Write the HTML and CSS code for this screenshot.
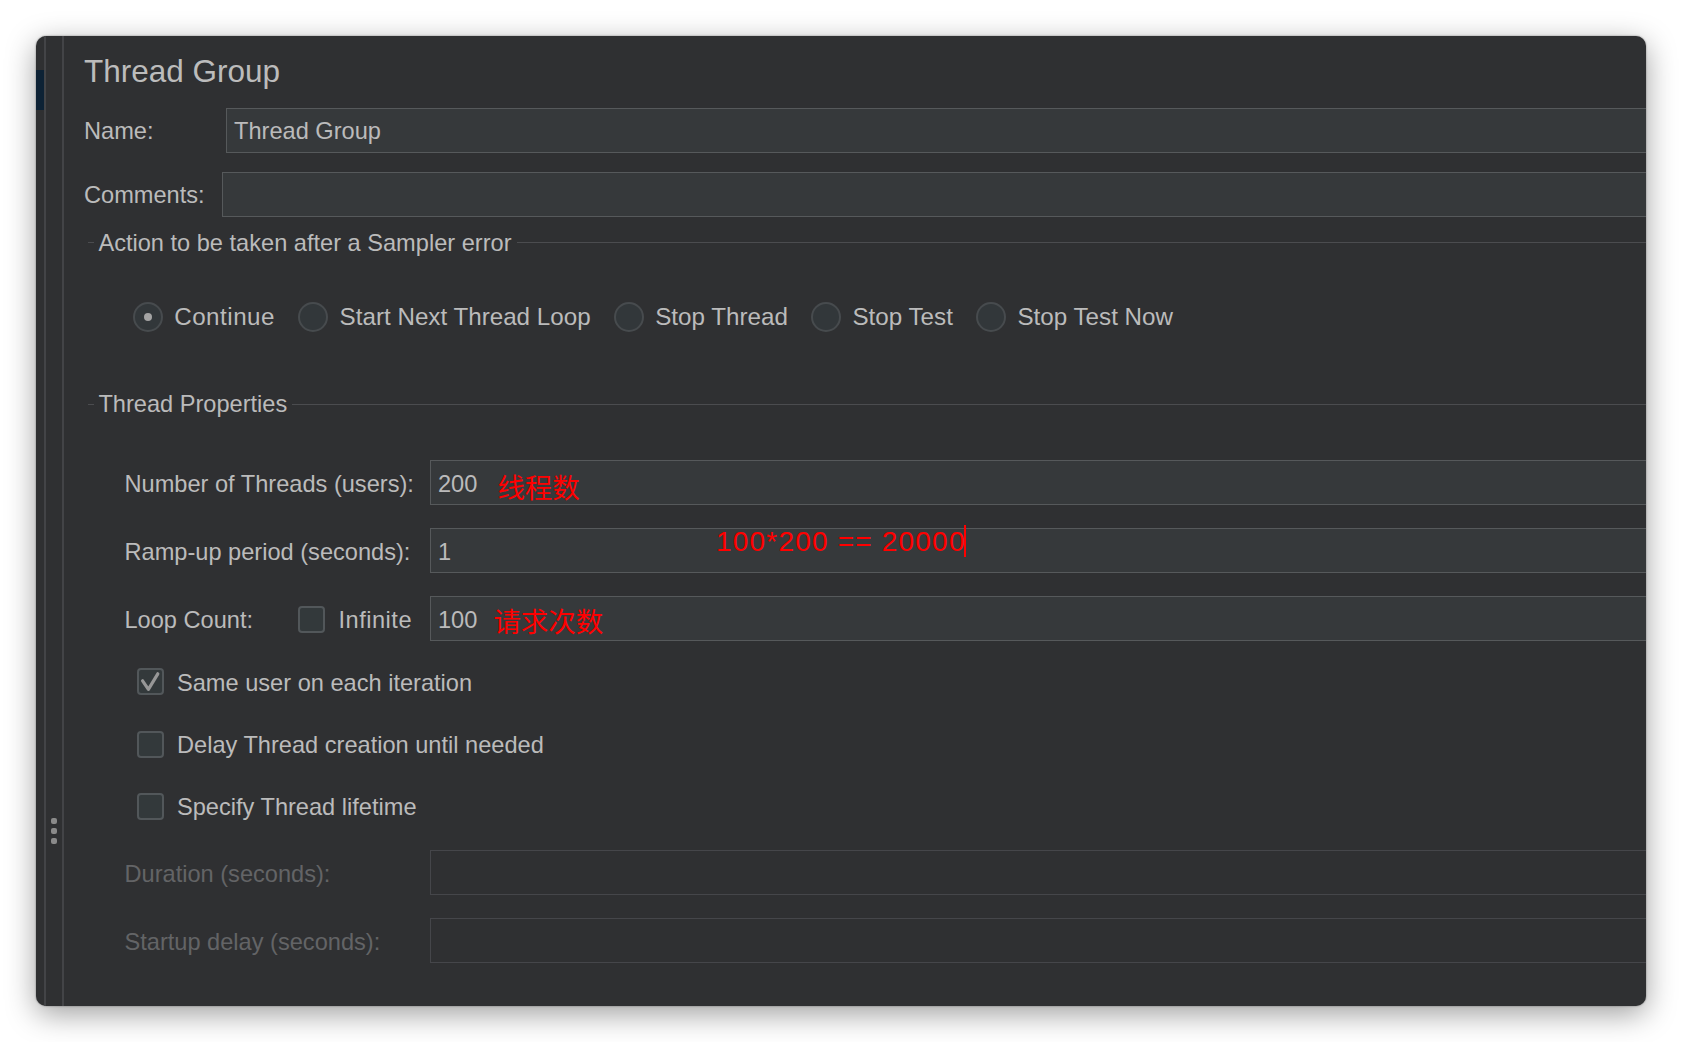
FILE: index.html
```html
<!DOCTYPE html>
<html lang="en">
<head>
<meta charset="utf-8">
<title>Thread Group</title>
<link rel="stylesheet" href="styles.css">
</head>
<body>
<div class="window">
  <div class="strip"><div class="strip-sel"></div></div>
  <div class="splitter">
    <span class="grip-dot"></span><span class="grip-dot"></span><span class="grip-dot"></span>
  </div>
  <div class="content">
    <h1 class="title">Thread Group</h1>

    <div class="row row-name">
      <span class="lbl lbl-name">Name:</span>
      <div class="field"><span class="val">Thread Group</span></div>
    </div>
    <div class="row row-comments">
      <span class="lbl lbl-comments">Comments:</span>
      <div class="field"></div>
    </div>

    <div class="legend legend-action">
      <span class="dash"></span><span class="legend-text">Action to be taken after a Sampler error</span><span class="rule"></span>
    </div>

    <div class="radios">
      <div class="radio-opt"><span class="radio on"></span><span class="radio-text wide">Continue</span></div>
      <div class="radio-opt"><span class="radio"></span><span class="radio-text">Start Next Thread Loop</span></div>
      <div class="radio-opt"><span class="radio"></span><span class="radio-text">Stop Thread</span></div>
      <div class="radio-opt"><span class="radio"></span><span class="radio-text">Stop Test</span></div>
      <div class="radio-opt"><span class="radio"></span><span class="radio-text">Stop Test Now</span></div>
    </div>

    <div class="legend legend-props">
      <span class="dash"></span><span class="legend-text">Thread Properties</span><span class="rule"></span>
    </div>

    <div class="props">
      <div class="prow prow-first">
        <span class="prow-label">Number of Threads (users):</span>
        <div class="field"><span class="val">200</span><span class="note note-threads">线程数</span></div>
      </div>
      <div class="prow prow-next">
        <span class="prow-label">Ramp-up period (seconds):</span>
        <div class="field"><span class="val">1</span><span class="note-calc">100*200 == 20000</span><span class="caret"></span></div>
      </div>
      <div class="prow prow-next">
        <span class="prow-label">
          <span>Loop Count:</span>
          <span class="inf"><span class="cbox"></span><span>Infinite</span></span>
        </span>
        <div class="field"><span class="val">100</span><span class="note note-loop">请求次数</span></div>
      </div>

      <div class="crow crow-first">
        <span class="cbox checked"><svg viewBox="0 0 23 23" width="23" height="23"><path d="M3.6 10.8 L9.4 19.4 L18.8 3.8" fill="none" stroke="#979797" stroke-width="3.2" stroke-linecap="round" stroke-linejoin="round"/></svg></span>
        <span>Same user on each iteration</span>
      </div>
      <div class="crow crow-second">
        <span class="cbox"></span>
        <span>Delay Thread creation until needed</span>
      </div>
      <div class="crow crow-third">
        <span class="cbox"></span>
        <span>Specify Thread lifetime</span>
      </div>

      <div class="prow prow-dim prow-duration">
        <span class="prow-label">Duration (seconds):</span>
        <div class="field field-dim"></div>
      </div>
      <div class="prow prow-dim prow-next">
        <span class="prow-label">Startup delay (seconds):</span>
        <div class="field field-dim"></div>
      </div>
    </div>
  </div>
</div>
</body>
</html>
```

FILE: styles.css
```css
* { box-sizing: border-box; }
html, body { margin: 0; padding: 0; }
body {
  background: #ffffff;
  width: 1682px;
  height: 1042px;
  overflow: hidden;
  font-family: "Liberation Sans", Arial, sans-serif;
}

.window {
  margin: 36px;
  width: 1610px;
  height: 970px;
  background: #2f3032;
  border-radius: 10px;
  overflow: hidden;
  display: flex;
  box-shadow: 0 8px 30px rgba(0, 0, 0, 0.38), 0 0 2px rgba(0, 0, 0, 0.45);
}

.strip {
  flex: none;
  width: 10px;
  border-right: 2px solid #434447;
  padding-top: 34px;
}
.strip-sel { height: 40px; background: #0d2235; }

.splitter {
  flex: none;
  width: 18px;
  border-right: 2px solid #434447;
  display: flex;
  flex-direction: column;
  align-items: center;
  gap: 4px;
  padding-top: 782px;
}
.grip-dot {
  width: 6px;
  height: 6px;
  border-radius: 2px;
  background: #8a8a8a;
}

.content {
  flex: 1;
  min-width: 0;
  padding: 14.8px 0 0 20px;
  color: #bbbbbb;
  font-size: 23.6px;
  line-height: 28px;
}

.title {
  margin: 0;
  height: 40px;
  font-size: 31.5px;
  font-weight: normal;
  line-height: 40px;
  color: #bcbcbc;
}

.row { display: flex; align-items: center; height: 45px; }
.row-name { margin-top: 17.2px; }
.row-comments { margin-top: 19px; }
.lbl { flex: none; padding-top: 2px; }
.lbl-name { width: 142px; }
.lbl-comments { width: 138px; }

.field {
  flex: 1;
  min-width: 0;
  height: 45px;
  position: relative;
  display: flex;
  align-items: center;
  padding: 2px 0 0 7px;
  background: #36393b;
  border: 1px solid #56595b;
  border-right: 0;
  color: #bbbbbb;
}
.val { white-space: nowrap; }

.legend {
  display: flex;
  align-items: center;
  height: 24px;
  margin-left: 4px;
}
.legend-action { margin-top: 14px; }
.legend-props { margin-top: 60.5px; }
.dash { width: 6px; height: 1px; background: #4b4c4f; margin-right: 4.4px; }
.legend-text { line-height: 24px; white-space: nowrap; }
.rule { flex: 1; height: 1px; background: #4b4c4f; margin-left: 5px; }

.radios {
  display: flex;
  align-items: center;
  height: 30px;
  margin-top: 47px;
  padding-left: 48.6px;
  font-size: 24.2px;
}
.radio-opt {
  display: flex;
  align-items: center;
  gap: 11.6px;
  margin-right: 23px;
  white-space: nowrap;
}
.radio-text.wide { letter-spacing: 0.5px; }
.radio {
  flex: none;
  width: 30px;
  height: 30px;
  border-radius: 50%;
  border: 2px solid #474b4e;
  background: #32373a;
  display: flex;
  align-items: center;
  justify-content: center;
}
.radio.on::after {
  content: "";
  width: 8px;
  height: 8px;
  border-radius: 50%;
  background: #a4a4a4;
}

.props { padding-left: 40.5px; }
.prow { display: flex; align-items: center; height: 45px; }
.prow-first { margin-top: 44px; }
.prow-next { margin-top: 23px; }
.prow-duration { margin-top: 30px; }
.prow-label {
  flex: none;
  width: 287.5px;
  margin-right: 18px;
  padding-top: 2px;
  display: flex;
  align-items: center;
  justify-content: space-between;
  white-space: nowrap;
}
.inf { display: flex; align-items: center; gap: 13px; letter-spacing: 0.5px; }
.prow-dim .prow-label { color: #636466; }
.field-dim { background: transparent; border-color: #45464a; }

.crow {
  display: flex;
  align-items: center;
  gap: 13.4px;
  height: 28px;
  padding-left: 12.1px;
  white-space: nowrap;
}
.crow > span:last-child { padding-top: 2px; }
.crow-first { margin-top: 26.5px; }
.crow-second { margin-top: 34.5px; }
.crow-third { margin-top: 34px; }

.cbox {
  flex: none;
  width: 27px;
  height: 27px;
  border: 2px solid #52575a;
  border-radius: 4px;
  background: #33393b;
  display: flex;
}
.cbox svg { display: block; }

.note {
  color: #ff0000;
  font-family: "Noto Sans CJK SC", "Liberation Sans", sans-serif;
  font-size: 27.5px;
  line-height: 28px;
  white-space: nowrap;
}
.note-threads { margin-left: 20px; margin-top: 4px; }
.note-loop { margin-left: 16px; }

.note-calc {
  position: absolute;
  left: 285px;
  top: -1px;
  color: #ff0000;
  font-family: "Liberation Sans", Arial, sans-serif;
  font-size: 28px;
  line-height: 28px;
  letter-spacing: 1.2px;
  white-space: nowrap;
}
.caret {
  position: absolute;
  left: 533px;
  top: -4px;
  width: 2px;
  height: 32px;
  background: #ff0000;
}
```
